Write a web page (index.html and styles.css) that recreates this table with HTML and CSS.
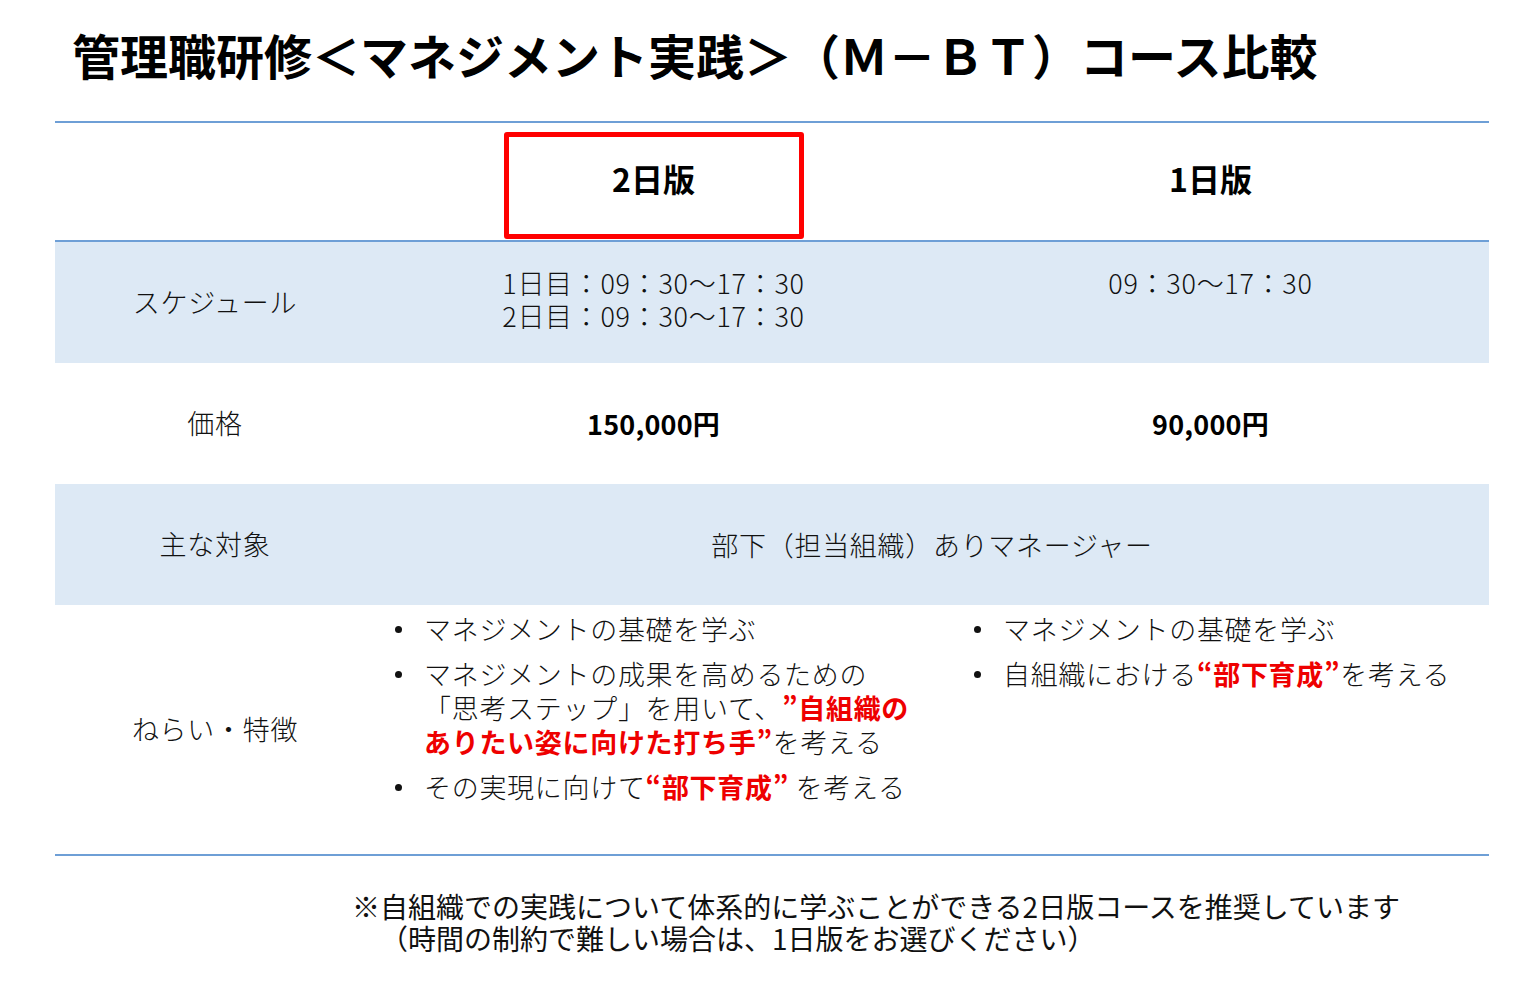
FILE: index.html
```html
<!DOCTYPE html>
<html lang="ja">
<head>
<meta charset="utf-8">
<title>管理職研修 コース比較</title>
<link rel="stylesheet" href="styles.css">
</head>
<body>
<div class="page">
  <h1 class="title">管理職研修＜マネジメント実践＞（Ｍ－ＢＴ）コース比較</h1>

  <div class="table">
    <div class="row head">
      <div class="cell"></div>
      <div class="cell center"><div class="pick">2日版</div></div>
      <div class="cell center"><div class="plan">1日版</div></div>
    </div>

    <div class="row tint sched">
      <div class="cell center label">スケジュール</div>
      <div class="cell top"><div>1日目：09：30〜17：30</div><div>2日目：09：30〜17：30</div></div>
      <div class="cell top"><div>09：30〜17：30</div></div>
    </div>

    <div class="row std">
      <div class="cell center label">価格</div>
      <div class="cell center price">150,000円</div>
      <div class="cell center price">90,000円</div>
    </div>

    <div class="row tint std">
      <div class="cell center label">主な対象</div>
      <div class="cell center span2">部下（担当組織）ありマネージャー</div>
    </div>

    <div class="row aims">
      <div class="cell center label">ねらい・特徴</div>
      <div class="cell">
        <ul class="list list-a">
          <li><span>マネジメントの基礎を学ぶ</span></li>
          <li><span>マネジメントの成果を高めるための<br>「思考ステップ」を用いて、<b class="em">”自組織の<br>ありたい姿に向けた打ち手”</b>を考える</span></li>
          <li><span>その実現に向けて<b class="em">“部下育成”</b> を考える</span></li>
        </ul>
      </div>
      <div class="cell">
        <ul class="list list-b">
          <li><span>マネジメントの基礎を学ぶ</span></li>
          <li><span>自組織における<b class="em">“部下育成”</b>を考える</span></li>
        </ul>
      </div>
    </div>
  </div>

  <p class="note">※自組織での実践について体系的に学ぶことができる2日版コースを推奨しています<br><span class="note2">（時間の制約で難しい場合は、1日版をお選びください）</span></p>
</div>
</body>
</html>
```

FILE: styles.css
```css
* { box-sizing: border-box; }

html, body {
  margin: 0;
  padding: 0;
  background: #ffffff;
}

body {
  font-family: "Noto Sans CJK JP", "Noto Sans", sans-serif;
  color: #111111;
  text-spacing-trim: space-all;
}

.page {
  width: 1534px;
  padding: 0 45px 0 55px;
}

.title {
  margin: 0 0 43px 17px;
  padding-top: 30px;
  font-size: 48px;
  line-height: 48px;
  font-weight: 700;
  color: #000000;
  letter-spacing: 0;
  white-space: nowrap;
}

.table {
  width: 1434px;
  border-top: 2px solid #6e9fd6;
  border-bottom: 2px solid #6e9fd6;
}

.row {
  display: grid;
  grid-template-columns: 320px 557px 557px;
}

.head {
  height: 119px;
  border-bottom: 2px solid #6e9fd6;
}

.tint { background: #dde9f5; }

.sched { height: 121px; }
.std { height: 121px; }
.aims { height: 249px; }

.cell {
  font-size: 27px;
  letter-spacing: 0.7px;
  font-weight: 300;
  line-height: 34px;
}

.center {
  display: flex;
  align-items: center;
  justify-content: center;
}

.top {
  padding-top: 24px;
  text-align: center;
  line-height: 33px;
}

.span2 { grid-column: 2 / span 2; }

.label { padding-bottom: 2px; }

.pick {
  width: 300px;
  height: 107px;
  margin-top: 7px;
  border: 5px solid #ff0000;
  border-radius: 3px;
  display: flex;
  align-items: center;
  justify-content: center;
  padding-bottom: 14px;
  font-size: 32px;
  font-weight: 700;
  letter-spacing: 0;
  color: #000;
}

.plan {
  font-size: 32px;
  font-weight: 700;
  letter-spacing: 0;
  color: #000;
  padding-bottom: 8px;
}

.price {
  font-weight: 700;
  letter-spacing: 0.2px;
  color: #000;
}

.list {
  list-style: none;
  margin: 0;
  padding: 7px 0 0 0;
}

.list-a { padding-left: 20px; }
.list-b { padding-left: 42px; }

.list li {
  display: flex;
  align-items: flex-start;
  margin-bottom: 11px;
  white-space: nowrap;
}

.list li::before {
  content: "";
  flex: 0 0 7px;
  width: 7px;
  height: 7px;
  border-radius: 50%;
  background: #111;
  margin: 14px 22px 0 0;
}

.em {
  color: #ee0000;
  font-weight: 700;
}

.note {
  margin: 34px 0 0 297px;
  font-size: 28px;
  line-height: 32px;
  font-weight: 400;
  color: #111;
  white-space: nowrap;
}

.note2 { padding-left: 28px; }
```
